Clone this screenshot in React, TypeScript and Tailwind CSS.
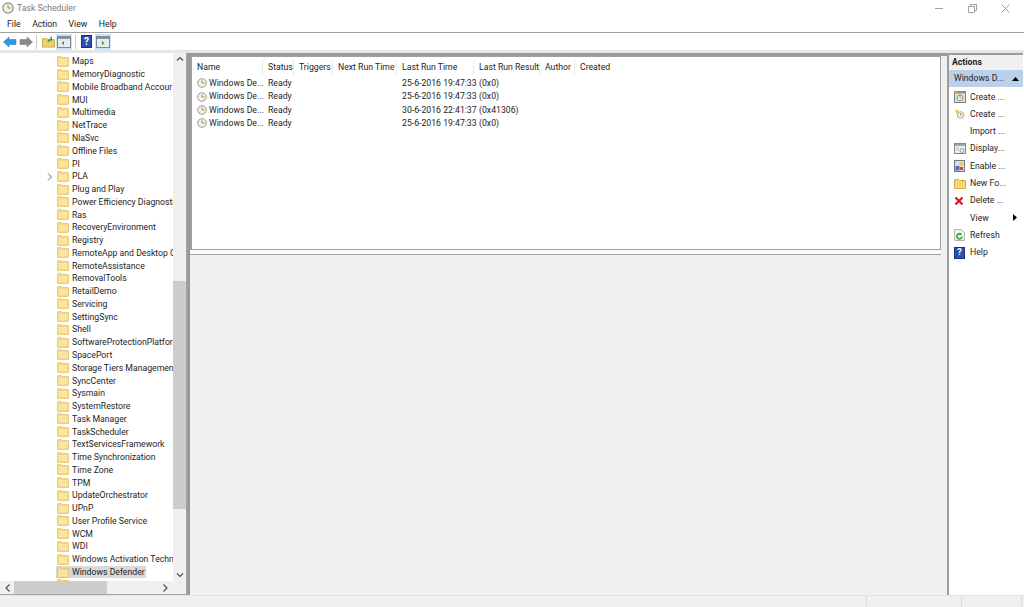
import React from 'react';

const folders = [
  'Maps', 'MemoryDiagnostic', 'Mobile Broadband Accour', 'MUI', 'Multimedia', 'NetTrace', 'NlaSvc', 'Offline Files', 'PI', 'PLA',
  'Plug and Play', 'Power Efficiency Diagnosti', 'Ras', 'RecoveryEnvironment', 'Registry', 'RemoteApp and Desktop C', 'RemoteAssistance',
  'RemovalTools', 'RetailDemo', 'Servicing', 'SettingSync', 'Shell', 'SoftwareProtectionPlatfor', 'SpacePort', 'Storage Tiers Management',
  'SyncCenter', 'Sysmain', 'SystemRestore', 'Task Manager', 'TaskScheduler', 'TextServicesFramework', 'Time Synchronization', 'Time Zone',
  'TPM', 'UpdateOrchestrator', 'UPnP', 'User Profile Service', 'WCM', 'WDI', 'Windows Activation Techn', 'Windows Defender', '',
];

const tasks = [
  { last: '25-6-2016 19:47:33', result: '(0x0)' },
  { last: '25-6-2016 19:47:33', result: '(0x0)' },
  { last: '30-6-2016 22:41:37', result: '(0x41306)' },
  { last: '25-6-2016 19:47:33', result: '(0x0)' },
];

const columns = [
  { name: 'Name', cls: 'w-[71px]' },
  { name: 'Status', cls: 'w-[31px]' },
  { name: 'Triggers', cls: 'w-[39px]' },
  { name: 'Next Run Time', cls: 'w-[64px]' },
  { name: 'Last Run Time', cls: 'w-[77px]' },
  { name: 'Last Run Result', cls: 'w-[66px]' },
  { name: 'Author', cls: 'w-[35px]' },
  { name: 'Created', cls: 'w-[50px]' },
];

const Folder = () => (
  <svg width="12" height="11" viewBox="0 0 12 11" className="shrink-0">
    <path d="M0.5 2V1.2C0.5 0.8 0.8 0.5 1.2 0.5H4L5 1.5H11C11.3 1.5 11.5 1.7 11.5 2V10C11.5 10.3 11.3 10.5 11 10.5H1C0.7 10.5 0.5 10.3 0.5 10Z" fill="#f6d67f" stroke="#e2c470" strokeWidth="0.8" />
    <rect x="1.5" y="3" width="9" height="6.5" fill="#fbe3a0" />
  </svg>
);

const Clock = () => (
  <svg width="10" height="10" viewBox="0 0 10 10" className="shrink-0">
    <circle cx="5" cy="5" r="4.3" fill="#f4f1e8" stroke="#9a9a94" strokeWidth="1" />
    <path d="M5 2.2V5H7.6" fill="none" stroke="#b98f3c" strokeWidth="1" />
  </svg>
);

const ActionIcon = ({ kind }: { kind: string }) => {
  if (kind === 'createBasic') {
    return (
      <svg width="12" height="12" viewBox="0 0 12 12">
        <rect x="0.5" y="0.5" width="11" height="11" fill="#e4e4e0" stroke="#77807f" />
        <rect x="0.5" y="0.5" width="11" height="2" fill="#8b9698" />
        <circle cx="6" cy="7" r="3" fill="#f5f1e5" stroke="#8e8a78" />
        <path d="M6 5V7H7.5" fill="none" stroke="#a8803a" strokeWidth="0.7" />
        <path d="M0.5 0.5L4 1L1 3.5Z" fill="#f0b02c" />
      </svg>
    );
  }
  if (kind === 'create') {
    return (
      <svg width="12" height="12" viewBox="0 0 12 12">
        <circle cx="6.5" cy="7" r="3.3" fill="#f7efd9" stroke="#b7a888" />
        <path d="M6.5 5V7H8" fill="none" stroke="#a8803a" strokeWidth="0.7" />
        <path d="M1 1.5L5 2.5L2.5 5.5Z" fill="#f2b632" />
      </svg>
    );
  }
  if (kind === 'display') {
    return (
      <svg width="12" height="11" viewBox="0 0 12 11">
        <rect x="0.5" y="0.5" width="11" height="10" fill="#eef0f2" stroke="#7f8a92" />
        <rect x="1" y="1" width="10" height="2" fill="#9aa6ae" />
        <circle cx="8" cy="7.5" r="2" fill="#f5f1e5" stroke="#6f7f8c" strokeWidth="0.7" />
        <path d="M2 5H5M2 7H5" stroke="#a4adb4" strokeWidth="0.8" />
      </svg>
    );
  }
  if (kind === 'enable') {
    return (
      <svg width="11" height="12" viewBox="0 0 11 12">
        <rect x="0.5" y="0.5" width="10" height="11" fill="#d9dde6" stroke="#6e7690" />
        <rect x="1.5" y="6" width="4" height="4.5" fill="#5d6f9c" />
        <rect x="5.5" y="2" width="3.5" height="3.5" fill="#f1c84a" />
        <rect x="6" y="7" width="3" height="3" fill="#c2504a" />
      </svg>
    );
  }
  if (kind === 'folder') {
    return (
      <svg width="12" height="11" viewBox="0 0 12 11">
        <path d="M0.5 10.5V1.5H4.5L5.5 2.5H11.5V10.5Z" fill="#f7d674" stroke="#d5ad4e" />
        <path d="M8.5 0.5L9 2L10.5 2.5L9 3L8.5 4.5L8 3L6.5 2.5L8 2Z" fill="#f0a820" />
      </svg>
    );
  }
  if (kind === 'delete') {
    return (
      <svg width="10" height="10" viewBox="0 0 10 10">
        <path d="M1.5 1.5L8.5 8.5M8.5 1.5L1.5 8.5" stroke="#d8191f" strokeWidth="2.2" />
      </svg>
    );
  }
  if (kind === 'refresh') {
    return (
      <svg width="11" height="12" viewBox="0 0 11 12">
        <path d="M0.5 0.5H7.5L10.5 3.5V11.5H0.5Z" fill="#f1f2f0" stroke="#b2b7b4" />
        <path d="M8 7.5A2.6 2.6 0 1 1 6.5 5" fill="none" stroke="#2e9e3c" strokeWidth="1.5" />
        <path d="M5.5 3.5L8 5L5.8 6.6Z" fill="#2e9e3c" />
      </svg>
    );
  }
  if (kind === 'help') {
    return <HelpBox />;
  }
  return null;
};

const HelpBox = () => (
  <div className="w-[11px] h-[12px] bg-[#2f4fb0] border border-[#1d2f80] flex items-center justify-center text-white text-[9px] font-bold leading-none">?</div>
);

const actions = [
  { label: 'Create ...', icon: 'createBasic' },
  { label: 'Create ...', icon: 'create' },
  { label: 'Import ...', icon: '' },
  { label: 'Display...', icon: 'display' },
  { label: 'Enable ...', icon: 'enable' },
  { label: 'New Fo...', icon: 'folder' },
  { label: 'Delete ...', icon: 'delete' },
  { label: 'View', icon: '', arrow: true },
  { label: 'Refresh', icon: 'refresh' },
  { label: 'Help', icon: 'help' },
];

const PaneToggle = ({ side, className }: { side: 'left' | 'right'; className: string }) => (
  <div className={`w-[16px] h-[16px] bg-[#cce4f7] flex items-center justify-center ${className}`}>
    <svg width="14" height="13" viewBox="0 0 14 13">
      <rect x="0.5" y="1.5" width="13" height="11" fill="#e8eaec" stroke="#7d8a94" />
      <rect x="1" y="2" width="12" height="2" fill="#8795a0" />
      {side === 'left' ? <path d="M7 6V10L4.5 8Z" fill="#2f9e3e" /> : <path d="M6 6V10L8.5 8Z" fill="#2f9e3e" />}
    </svg>
  </div>
);

export default function App() {
  return (
    <div className="w-[1024px] h-[607px] bg-white overflow-hidden flex flex-col text-[8.7px] leading-none text-[#1e1e1e] font-['Roboto',sans-serif]">
      {/* title bar */}
      <div className="h-[16px] flex items-center pl-[2px] shrink-0">
        <svg width="12" height="12" viewBox="0 0 12 12">
          <circle cx="6" cy="6" r="5.2" fill="#f1efe6" stroke="#8d8d86" strokeWidth="1.2" />
          <path d="M6 2.6V6H9" fill="none" stroke="#b38a3c" strokeWidth="1" />
        </svg>
        <span className="ml-[3px] text-[#7c7c7c]">Task Scheduler</span>
        <div className="ml-auto flex items-center">
          <div className="w-[8px] h-[1px] bg-[#a0a0a0] mr-[25px]" />
          <svg width="9" height="9" viewBox="0 0 9 9" className="mr-[24px]">
            <path d="M0.5 2.5H6.5V8.5H0.5ZM2.5 2.5V0.5H8.5V6.5H6.5" fill="none" stroke="#a0a0a0" />
          </svg>
          <svg width="9" height="9" viewBox="0 0 9 9" className="mr-[14px]">
            <path d="M0.5 0.5L8.5 8.5M8.5 0.5L0.5 8.5" stroke="#a0a0a0" />
          </svg>
        </div>
      </div>

      {/* menu */}
      <div className="h-[17px] flex items-center pl-[7px] pt-[1px] gap-[11.5px] border-b border-[#a0a0a0] shrink-0 text-[#222]">
        <span>File</span>
        <span>Action</span>
        <span>View</span>
        <span>Help</span>
      </div>

      {/* toolbar */}
      <div className="h-[17px] flex items-center pl-[3px] shrink-0">
        <svg width="14" height="12" viewBox="0 0 14 12">
          <path d="M0.5 6L6 1V3.5H13V8.5H6V11Z" fill="#2b9be0" stroke="#1f78b8" strokeWidth="0.5" />
        </svg>
        <svg width="14" height="12" viewBox="0 0 14 12" className="ml-[2px]">
          <path d="M13.5 6L8 1V3.5H1V8.5H8V11Z" fill="#8a8a8a" stroke="#747474" strokeWidth="0.5" />
        </svg>
        <div className="w-[1px] h-[14px] bg-[#c9c9c9] ml-[3px]" />
        <svg width="13" height="13" viewBox="0 0 14 13" className="ml-[5px]">
          <path d="M0.5 12.5V3.5H5L6 4.5H13.5V12.5Z" fill="#f0cf6e" stroke="#c7a24a" />
          <path d="M6 7L10 3.5M10 1V5H6.5" fill="none" stroke="#3c9a3c" strokeWidth="1.5" />
        </svg>
        <PaneToggle side="left" className="ml-[1px]" />
        <div className="w-[1px] h-[14px] bg-[#c9c9c9] ml-[3px]" />
        <div className="w-[11px] h-[13px] bg-[#2f4fb0] border border-[#1d2f80] flex items-center justify-center text-white text-[10px] font-bold ml-[5px]">?</div>
        <PaneToggle side="right" className="ml-[3px]" />
      </div>

      {/* main */}
      <div className="flex-1 min-h-0 flex border-t-[3px] border-[#e6e6e6]">
        {/* tree */}
        <div className="w-[187px] shrink-0 h-full border-r border-b border-[#a6a6a6] flex flex-col">
          <div className="flex-1 min-h-0 flex">
            <div className="flex-1 min-w-0 overflow-hidden pt-[2px]">
              {folders.map((f) => (
                <div key={f} className="h-[12.78px] flex items-center pl-[56px] relative">
                  {f === 'PLA' && (
                    <svg width="6" height="8" viewBox="0 0 6 8" className="absolute left-[47px] top-[3px]">
                      <path d="M1 0.5L4.5 4L1 7.5" fill="none" stroke="#6a6a6a" />
                    </svg>
                  )}
                  <div className={`flex items-center h-[12px] pl-[1px] pr-[1px] ${f === 'Windows Defender' ? 'bg-[#d9d9d9]' : ''}`}>
                    <Folder />
                    <span className="ml-[3px] whitespace-nowrap leading-[12px]">{f}</span>
                  </div>
                </div>
              ))}
            </div>
            <div className="w-[13px] shrink-0 flex flex-col items-center bg-[#f0f0f0]">
              <svg width="8" height="6" viewBox="0 0 8 6" className="mt-[3px]">
                <path d="M1 4.5L4 1.5L7 4.5" fill="none" stroke="#505050" strokeWidth="1.2" />
              </svg>
              <div className="w-full h-[228px] bg-[#cdcdcd] mt-[219px]" />
              <svg width="8" height="6" viewBox="0 0 8 6" className="mt-auto mb-[3px]">
                <path d="M1 1.5L4 4.5L7 1.5" fill="none" stroke="#505050" strokeWidth="1.2" />
              </svg>
            </div>
          </div>
          <div className="h-[13px] shrink-0 bg-[#f0f0f0] flex items-center">
            <svg width="6" height="8" viewBox="0 0 6 8" className="ml-[5px]">
              <path d="M4.5 0.5L1 4L4.5 7.5" fill="none" stroke="#505050" strokeWidth="1.2" />
            </svg>
            <div className="w-[93px] h-full bg-[#cdcdcd] ml-[3px]" />
            <svg width="6" height="8" viewBox="0 0 6 8" className="ml-auto mr-[18px]">
              <path d="M1.5 0.5L5 4L1.5 7.5" fill="none" stroke="#505050" strokeWidth="1.2" />
            </svg>
          </div>
        </div>

        {/* center */}
        <div className="w-[760px] shrink-0 h-full flex flex-col bg-[#f0f0f0] border-l-[3px] border-t-[3px] border-[#9a9a9a]">
          <div className="h-[194px] shrink-0 bg-white border border-[#a0a0a0] border-l-2 mr-[6px] pt-[4px]">
            <div className="flex h-[13px] items-center">
              {columns.map((c) => (
                <div key={c.name} className={`${c.cls} pl-[5px] shrink-0 h-[15px] flex items-center whitespace-nowrap border-r border-[#e8e8e8] last:border-r-0`}>{c.name}</div>
              ))}
            </div>
            <div className="pt-[2.7px]">
              {tasks.map((t, i) => (
                <div key={i} className="h-[13.3px] flex items-center">
                  <div className="w-[71px] pl-[5px] flex items-center gap-[2px] whitespace-nowrap"><Clock />Windows De...</div>
                  <div className="w-[134px] pl-[5px]">Ready</div>
                  <div className="w-[77px] pl-[5px] whitespace-nowrap">{t.last}</div>
                  <div className="pl-[5px]">{t.result}</div>
                </div>
              ))}
            </div>
          </div>
          <div className="h-[5px] shrink-0 mr-[6px] bg-[#fafafa] border-b border-[#a0a0a0]" />
          <div className="flex-1 min-h-0 mr-[6px]" />
        </div>

        {/* actions */}
        <div className="flex-1 min-w-0 h-full border-l-2 border-t-2 border-[#9c9c9c] mr-[1px] bg-white flex flex-col">
          <div className="h-[15px] bg-[#f0f0f0] flex items-center pl-[3px] font-bold shrink-0">Actions</div>
          <div className="h-[17px] bg-[#b9d1ea] flex items-center pl-[5px] shrink-0 mb-[1.2px]">
            Windows D...
            <svg width="7" height="4" viewBox="0 0 7 4" className="ml-auto mr-[4px]"><path d="M0 4L3.5 0L7 4Z" fill="#000" /></svg>
          </div>
          {actions.map((a) => (
            <div key={a.label + a.icon} className="h-[17.33px] flex items-center shrink-0 relative">
              <div className="w-[21px] pl-[5px] flex items-center justify-start"><ActionIcon kind={a.icon} /></div>
              <span>{a.label}</span>
              {a.arrow && (
                <svg width="4" height="7" viewBox="0 0 4 7" className="absolute right-[6px] top-[5px]"><path d="M0 0L4 3.5L0 7Z" fill="#000" /></svg>
              )}
            </div>
          ))}
        </div>
      </div>

      {/* status bar */}
      <div className="h-[12px] shrink-0 bg-[#f0f0f0] border-t border-[#e3e3e3] flex justify-end">
        <div className="w-[95px] border-l border-[#dcdcdc]" />
        <div className="w-[60px] border-l border-[#dcdcdc]" />
        <div className="w-[3px] border-l border-[#dcdcdc]" />
      </div>
    </div>
  );
}
